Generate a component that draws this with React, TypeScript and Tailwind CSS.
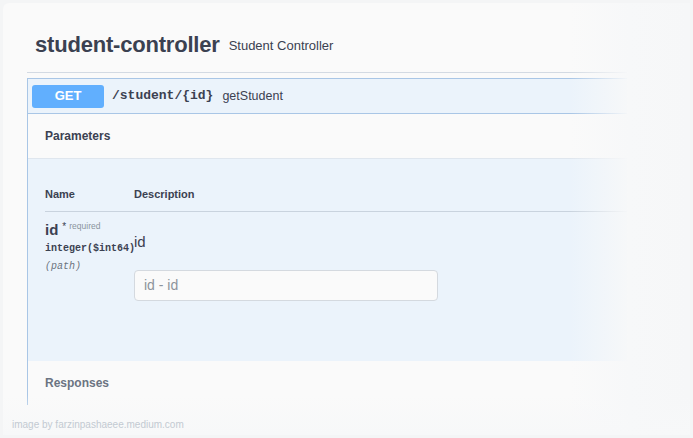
export default function App() {
  return (
    <div
      className="relative w-[693px] h-[438px] overflow-hidden bg-[#f4f5f6] p-[3px]"
      style={{ fontFamily: '"Liberation Sans", Arial, sans-serif' }}
    >
      <div className="relative h-full w-full rounded-[6px] bg-[#fafafa] pl-[24px]">
        <div className="w-[600px]">
          {/* tag header */}
          <div className="flex items-center gap-[9px] pl-[8px] pt-[25px] pb-[11px] border-b border-[#d3dae3]">
            <h1 className="text-[22px] font-bold text-[#3b4151] tracking-[-0.2px]">
              student-controller
            </h1>
            <span className="text-[13px] text-[#3b4151] pt-[2px]">Student Controller</span>
          </div>

          {/* opblock */}
          <div className="mt-[5px] border-l-[1.5px] border-t border-[#a9c6e6] bg-[#ebf3fb]">
            <div className="flex items-center h-[35px] px-[4px] border-b border-[#a9c6e6]">
              <div className="w-[72px] h-[23px] rounded-[3px] bg-[#61affe] text-white text-[13px] font-bold flex items-center justify-center">
                GET
              </div>
              <span
                className="ml-[8px] text-[13px] font-bold text-[#3b4151]"
                style={{ fontFamily: '"Liberation Mono", monospace' }}
              >
                /student/&#123;id&#125;
              </span>
              <span className="ml-[9px] text-[12.5px] text-[#3b4151]">getStudent</span>
            </div>

            <div className="h-[45px] bg-[#fafafa] flex items-center pl-[17px] border-b border-[#dfe6ee]">
              <span className="text-[12px] font-bold text-[#3b4151]">Parameters</span>
            </div>

            <div className="h-[202px] pl-[17px] pt-[27px]">
              <div className="flex h-[26px] border-b border-[#c9d3de] text-[11px] font-bold text-[#3b4151]">
                <div className="w-[89px]">Name</div>
                <div>Description</div>
              </div>
              <div className="flex pt-[8px]">
                <div className="w-[89px]">
                  <div className="flex items-start">
                    <span className="text-[15px] font-bold text-[#3b4151] leading-[20px]">id</span>
                    <span className="ml-[4px] text-[10px] text-[#3b4151] leading-[14px]">*</span>
                    <span className="ml-[3px] text-[8.5px] text-[#8a939d] leading-[12px]">required</span>
                  </div>
                  <div
                    className="text-[10px] font-bold text-[#3b4151] leading-[18px] whitespace-nowrap"
                    style={{ fontFamily: '"Liberation Mono", monospace' }}
                  >
                    integer($int64)
                  </div>
                  <div
                    className="text-[10px] italic text-[#6b7380] leading-[18px]"
                    style={{ fontFamily: '"Liberation Mono", monospace' }}
                  >
                    (path)
                  </div>
                </div>
                <div className="pt-[12px]">
                  <div className="text-[15px] text-[#3b4151] leading-[20px]">id</div>
                  <div className="mt-[18px] w-[304px] h-[31px] rounded-[4px] border border-[#d4d9df] bg-[#fafafa] flex items-center pl-[9px] text-[14px] text-[#8d949c]">
                    id - id
                  </div>
                </div>
              </div>
            </div>

            <div className="h-[44px] bg-[#fafafa] flex items-center pl-[17px]">
              <span className="text-[12px] font-bold text-[#6b7482]">Responses</span>
            </div>
          </div>
        </div>

        {/* edge fades */}
        <div className="absolute top-0 right-0 h-full w-[120px] bg-gradient-to-r from-[#fafafa00] via-[#f7f8f9] to-[#f6f7f8]" />
        <div className="absolute left-0 bottom-0 w-full h-[40px] bg-gradient-to-b from-[#fafafa00] to-[#f7f8f9]" />

        <div className="absolute left-[9px] bottom-[3px] text-[10px] text-[#c3cad2]">
          image by farzinpashaeee.medium.com
        </div>
      </div>
    </div>
  );
}
